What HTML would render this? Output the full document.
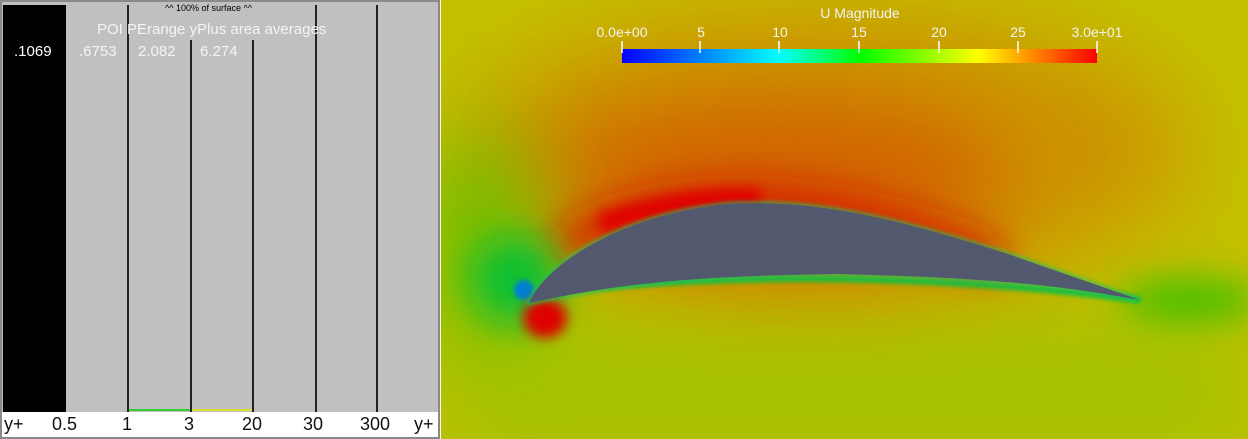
<!DOCTYPE html>
<html style="overflow:hidden;height:439px"><head><style>
body{margin:0;width:1248px;height:439px;overflow:hidden;background:#fff;font-family:"Liberation Sans",sans-serif;position:relative}
.l{position:absolute}
svg{display:block}
</style></head><body>
<div class="l" style="left:0;top:0;width:440px;height:439px;background:#8a8a8a"></div>
<div class="l" style="left:2px;top:2px;width:436px;height:410px;background:#c0c0c0"></div>
<div class="l" style="left:3px;top:5px;width:63px;height:407px;background:#000"></div>
<div class="l" style="left:127px;top:5px;width:2px;height:407px;background:#222"></div>
<div class="l" style="left:190px;top:40px;width:2px;height:372px;background:#222"></div>
<div class="l" style="left:252px;top:40px;width:2px;height:372px;background:#222"></div>
<div class="l" style="left:315px;top:5px;width:2px;height:407px;background:#222"></div>
<div class="l" style="left:376px;top:5px;width:2px;height:407px;background:#222"></div>
<div class="l" style="left:129px;top:409px;width:61px;height:2px;background:#3c3"></div>
<div class="l" style="left:192px;top:409px;width:60px;height:2px;background:#dd3"></div>
<div class="l" style="left:2px;top:412px;width:436px;height:25px;background:#fff"></div>
<div class="l" style="left:165px;top:3px;font-size:9px;color:#000">^^ 100% of surface ^^</div>
<div class="l" style="left:97px;top:21px;font-size:15px;color:#f4f4f4">POI PErange yPlus area averages</div>
<div class="l" style="left:14px;top:43px;font-size:15px;color:#fff">.1069</div>
<div class="l" style="left:79px;top:43px;font-size:15px;color:#f4f4f4">.6753</div>
<div class="l" style="left:138px;top:43px;font-size:15px;color:#f4f4f4">2.082</div>
<div class="l" style="left:200px;top:43px;font-size:15px;color:#f4f4f4">6.274</div>
<div class="l" style="top:414px;left:0;width:440px;height:22px;font-size:18px;line-height:20px;color:#111">
<span class="l" style="left:4px">y+</span><span class="l" style="left:52px">0.5</span><span class="l" style="left:122px">1</span><span class="l" style="left:184px">3</span><span class="l" style="left:242px">20</span><span class="l" style="left:303px">30</span><span class="l" style="left:360px">300</span><span class="l" style="left:414px">y+</span></div>

<svg class="l" style="left:441px;top:0" width="807" height="439" viewBox="441 0 807 439">
<defs>
<filter id="b" filterUnits="userSpaceOnUse" x="200" y="-300" width="1300" height="1000"><feGaussianBlur stdDeviation="45"/></filter>
<filter id="b2" filterUnits="userSpaceOnUse" x="200" y="-300" width="1300" height="1000"><feGaussianBlur stdDeviation="18"/></filter>
<filter id="b3" filterUnits="userSpaceOnUse" x="200" y="-300" width="1300" height="1000"><feGaussianBlur stdDeviation="6"/></filter>
<filter id="b4" filterUnits="userSpaceOnUse" x="200" y="-300" width="1300" height="1000"><feGaussianBlur stdDeviation="2"/></filter>
<linearGradient id="cb"><stop offset="0" stop-color="#00f"/><stop offset=".33" stop-color="#0ff"/><stop offset=".5" stop-color="#0f0"/><stop offset=".75" stop-color="#ff0"/><stop offset="1" stop-color="#f00"/></linearGradient>
</defs>
<rect x="441" y="0" width="807" height="439" fill="#c4c000"/>
<rect x="441" y="310" width="807" height="160" fill="#a6c200" filter="url(#b)"/>
<ellipse cx="830" cy="150" rx="360" ry="140" fill="#cc9400" filter="url(#b)"/>
<ellipse cx="780" cy="180" rx="230" ry="80" fill="#d26000" filter="url(#b)"/>
<ellipse cx="480" cy="240" rx="50" ry="110" fill="#60c000" filter="url(#b)"/>
<path d="M560,250 C620,205 720,195 800,205 C880,215 950,240 1000,260" fill="none" stroke="#d81400" stroke-width="30" filter="url(#b2)"/>
<path d="M600,225 C650,205 720,195 760,200" fill="none" stroke="#e00000" stroke-width="20" filter="url(#b3)"/>
<ellipse cx="515" cy="280" rx="45" ry="45" fill="#10c030" filter="url(#b2)"/>
<ellipse cx="524" cy="290" rx="10" ry="10" fill="#0080d0" filter="url(#b4)"/>
<ellipse cx="545" cy="318" rx="22" ry="20" fill="#e00000" filter="url(#b3)"/>
<ellipse cx="1190" cy="300" rx="70" ry="20" fill="#40c000" filter="url(#b2)"/>
<path d="M540,292 C700,276 900,270 1140,300" fill="none" stroke="#10c040" stroke-width="6" filter="url(#b4)"/>
<path d="M529,303 C545,265 620,215 727,204 C800,200 870,210 1005,253 L1140,300 C1060,286 1000,278 837,274 C700,276 626,282 529,303 Z" fill="none" stroke="#20c060" stroke-width="3" filter="url(#b4)"/>
<path d="M529,303 C545,265 620,215 727,204 C800,200 870,210 1005,253 L1140,300 C1060,286 1000,278 837,274 C700,276 626,282 529,303 Z" fill="#52586e"/>
<rect x="622" y="49" width="475" height="14" fill="url(#cb)"/>
<g stroke="#fff" stroke-width="1.5">
<line x1="622" y1="41" x2="622" y2="53"/><line x1="700" y1="41" x2="700" y2="53"/><line x1="779" y1="41" x2="779" y2="53"/><line x1="859" y1="41" x2="859" y2="53"/><line x1="939" y1="41" x2="939" y2="53"/><line x1="1018" y1="41" x2="1018" y2="53"/><line x1="1097" y1="41" x2="1097" y2="53"/></g>
<g fill="#f4f4f4" font-family="Liberation Sans, sans-serif" font-size="14" text-anchor="middle">
<text x="860" y="18">U Magnitude</text>
<text x="622" y="37">0.0e+00</text><text x="701" y="37">5</text><text x="780" y="37">10</text><text x="859" y="37">15</text><text x="939" y="37">20</text><text x="1018" y="37">25</text><text x="1097" y="37">3.0e+01</text></g>
</svg>
</body></html>
